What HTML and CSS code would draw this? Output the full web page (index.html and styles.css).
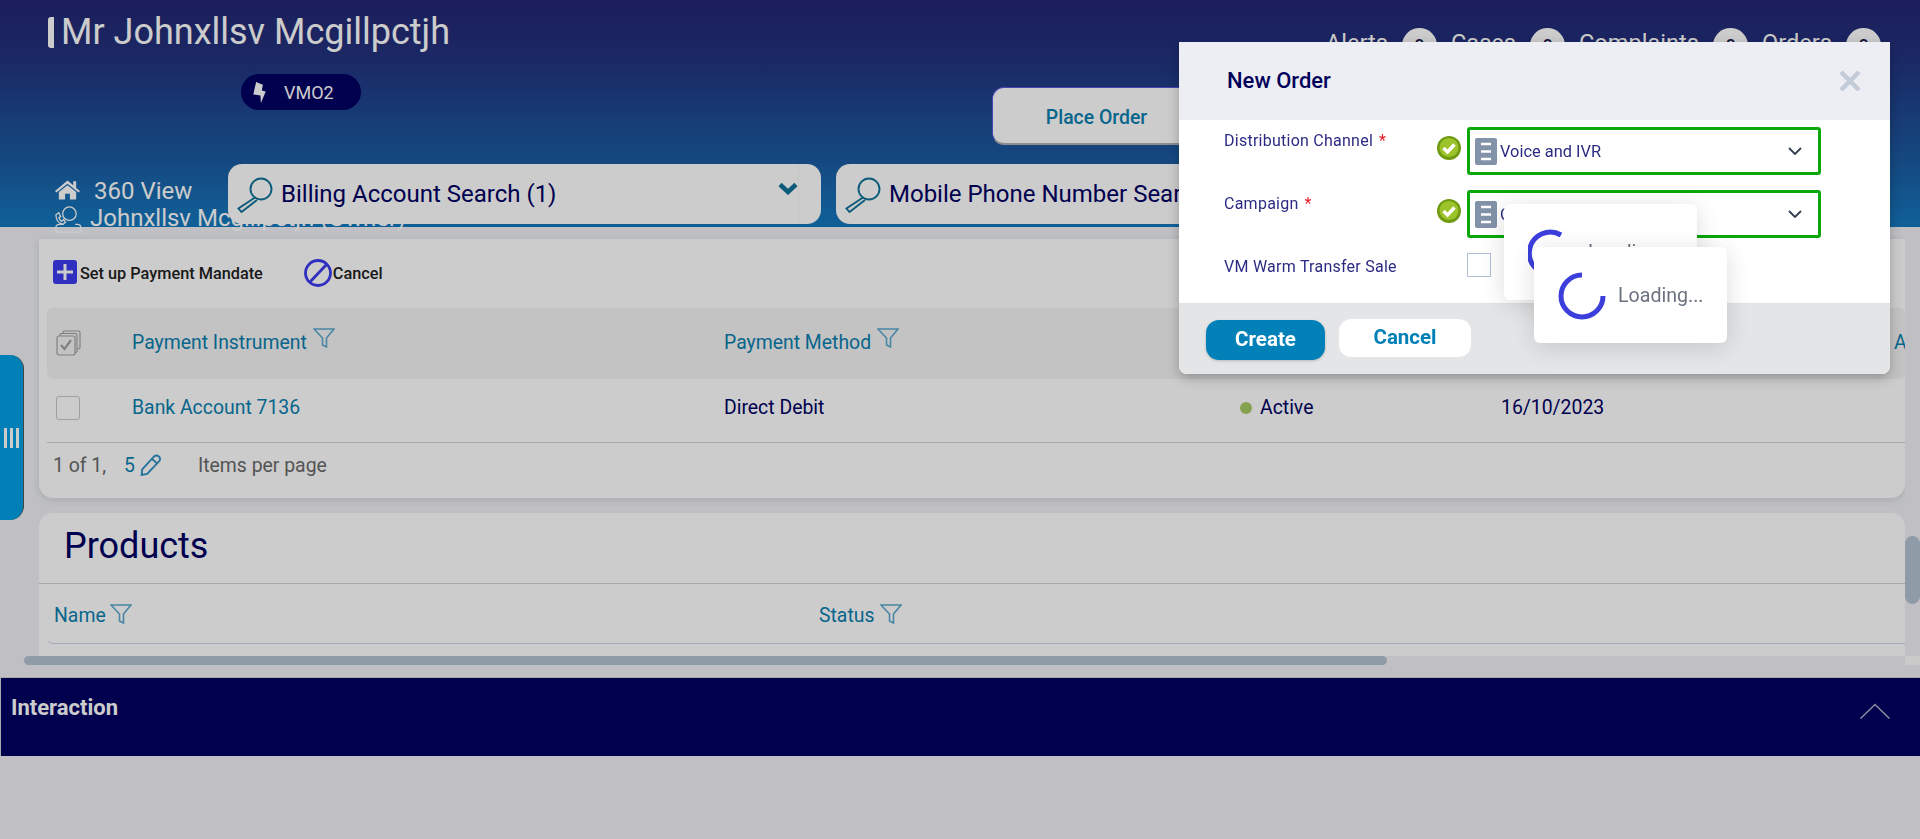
FILE: index.html
```html
<!DOCTYPE html>
<html lang="en">
<head>
<meta charset="utf-8">
<title>New Order</title>
<link rel="stylesheet" href="styles.css">
</head>
<body>
<div class="app">
  <header class="head">
    <div class="head-top">
      <h1 class="cust-name">Mr Johnxllsv Mcgillpctjh</h1>
      <ul class="stats">
        <li class="stat">Alerts<span class="count">0</span></li>
        <li class="stat">Cases<span class="count">0</span></li>
        <li class="stat">Complaints<span class="count">0</span></li>
        <li class="stat">Orders<span class="count">0</span></li>
      </ul>
    </div>
    <div class="head-mid">
      <span class="brand">
        <svg class="brand-icon" viewBox="0 0 14 24"><path d="M4 1 L11 4 L10 10 L14 11 L9 23 L8.5 15 L1 14 Z" fill="#fff"/></svg>
        VMO2
      </span>
      <button class="place-order">Place Order</button>
    </div>
    <div class="head-nav">
      <div class="crumbs">
        <div class="crumb">
          <svg class="home-icon" viewBox="0 0 26 20"><path d="M13 0 L19 5 V1 H22 V8 L26 11 L24.500 12.500 L13 3.500 L1.500 12.500 L0 11 Z M4 12 L13 5 L22 12 V20 H15.500 V14 H10.500 V20 H4 Z" fill="#fff"/></svg>
          360 View
        </div>
        <div class="crumb crumb-owner">
          <svg class="owner-icon" viewBox="0 0 30 28" fill="none" stroke="#fff" stroke-width="1.300"><circle cx="17" cy="8" r="7"/><path d="M3 27 V22 Q3 19 7 19 H11 M23 19 H25 Q29 19 29 23 V27 H3"/><path d="M3 9 L6 7 L8 11 L6 12 Q7 15 9 16 L11 14 L13 17 L10 19 Q3 17 3 9 Z"/></svg>
          Johnxllsv Mcgillpctjh (Owner)
        </div>
      </div>
      <div class="search-tab search-tab-first">
        <svg class="lens" viewBox="0 0 36 36" fill="none" stroke="#0f7299" stroke-width="1.900"><circle cx="24" cy="12" r="10.500"/><path d="M18 20.500 L1.500 31.500 L4.500 35 L20 23"/></svg>
        <span class="search-label">Billing Account Search (1)</span>
        <span class="search-caret"><svg viewBox="0 0 20 13" fill="none" stroke="#0f7299" stroke-width="4.500"><path d="M2 2.500 L10 10 L18 2.500"/></svg></span>
      </div>
      <div class="search-tab search-tab-second">
        <svg class="lens" viewBox="0 0 36 36" fill="none" stroke="#0f7299" stroke-width="1.900"><circle cx="24" cy="12" r="10.500"/><path d="M18 20.500 L1.500 31.500 L4.500 35 L20 23"/></svg>
        <span class="search-label">Mobile Phone Number Search</span>
      </div>
    </div>
  </header>

  <main class="workspace">
    <div class="scroll-view">
      <section class="card card-mandates">
        <div class="toolbar">
          <button class="tool tool-add">
            <svg class="add-icon" viewBox="0 0 24 24"><rect width="24" height="24" rx="3" fill="#3c3cf0"/><path d="M12 4 V20 M4 12 H20" stroke="#fff" stroke-width="3"/></svg>
            Set up Payment Mandate
          </button>
          <button class="tool tool-cancel">
            <svg class="cancel-icon" viewBox="0 0 28 28" fill="none" stroke="#3c3cf0" stroke-width="2.800"><circle cx="14" cy="14" r="12.500"/><path d="M6 23 L23 5"/></svg>
            Cancel
          </button>
        </div>
        <div class="grid-row grid-head">
          <span class="cell-check">
            <svg class="stack-icon" viewBox="0 0 25 26" fill="none" stroke="#a0a0a0" stroke-width="1.200"><rect x="7" y="1" width="17" height="18" rx="1.500"/><rect x="4" y="3.500" width="17" height="19" rx="1.500" fill="#f4f4f4"/><rect x="1" y="6" width="18" height="19" rx="2" fill="#f4f4f4"/><path d="M5 15 L8.500 19 L15 10" stroke-width="2.200"/></svg>
          </span>
          <span class="col-title">Payment Instrument<svg class="funnel" viewBox="0 0 22 20" fill="none" stroke="#5aa8cc" stroke-width="1.600"><path d="M1 1 H21 L13.500 10 V19 L9.500 17 V10 Z"/></svg></span>
          <span class="col-title">Payment Method<svg class="funnel" viewBox="0 0 22 20" fill="none" stroke="#5aa8cc" stroke-width="1.600"><path d="M1 1 H21 L13.500 10 V19 L9.500 17 V10 Z"/></svg></span>
          <span class="col-title">Status</span>
          <span class="col-title">Start Date</span>
          <span class="col-title">Amount</span>
        </div>
        <div class="grid-row grid-body">
          <span class="cell-check"><span class="row-box"></span></span>
          <a class="row-link">Bank Account 7136</a>
          <span>Direct Debit</span>
          <span class="status"><i class="status-dot"></i>Active</span>
          <span>16/10/2023</span>
          <span></span>
        </div>
        <div class="pager">
          <span>1 of 1,</span>
          <span class="page-size">5</span>
          <svg class="pencil" viewBox="0 0 20 20" fill="none" stroke="#2f8fc4" stroke-width="1.700"><path d="M2 14 L13 2 Q15 0.500 17.500 2.500 Q19 5 17.500 6.500 L6.500 18 L1.500 19 Z M11 4.500 L15.500 8.500"/></svg>
          <span class="per-page">Items per page</span>
        </div>
      </section>

      <section class="card card-products">
        <h2 class="section-title">Products</h2>
        <div class="products-head">
          <span class="col-title col-name">Name<svg class="funnel funnel-low funnel-tight" viewBox="0 0 22 20" fill="none" stroke="#5aa8cc" stroke-width="1.600"><path d="M1 1 H21 L13.500 10 V19 L9.500 17 V10 Z"/></svg></span>
          <span class="col-title">Status<svg class="funnel funnel-low" viewBox="0 0 22 20" fill="none" stroke="#5aa8cc" stroke-width="1.600"><path d="M1 1 H21 L13.500 10 V19 L9.500 17 V10 Z"/></svg></span>
        </div>
      </section>
    </div>
    <div class="vscroll"><span class="vthumb"></span></div>
    <div class="hscroll"><span class="hthumb"></span></div>
    <div class="corner"></div>
  </main>

  <footer class="interaction">
    <span class="interaction-title">Interaction</span>
    <svg class="interaction-caret" viewBox="0 0 30 16" fill="none" stroke="#b0b0c8" stroke-width="1.500"><path d="M0.500 15.500 L15 1.500 L29.500 15.500"/></svg>
  </footer>
</div>

<div class="side-handle"><span></span><span></span><span></span></div>

<div class="backdrop"></div>

<div class="modal">
  <div class="modal-head">
    <h3 class="modal-title">New Order</h3>
    <svg class="modal-close" viewBox="0 0 22 20" fill="none" stroke="#c3cbd8" stroke-width="4.500"><path d="M2 1 L20 19 M20 1 L2 19"/></svg>
  </div>
  <div class="modal-body">
    <div class="field">
      <label class="field-label">Distribution Channel<b class="req">*</b></label>
      <svg class="ok-icon" viewBox="0 0 24 24"><circle cx="12" cy="12" r="12" fill="#6f9a12"/><circle cx="12" cy="11.500" r="9.500" fill="#9cc42a"/><path d="M6.500 12 L10.500 16 L17.500 8.500" fill="none" stroke="#fff" stroke-width="3.400"/></svg>
      <div class="picker">
        <svg class="doc-icon" viewBox="0 0 22 27"><rect width="22" height="27" rx="2" fill="#8292a8"/><path d="M6 6 H16 M6 13.500 H16 M6 21 H16" stroke="#fff" stroke-width="2.600"/></svg>
        <span class="picker-value">Voice and IVR</span>
        <svg class="picker-caret" viewBox="0 0 14 8" fill="none" stroke="#333d50" stroke-width="1.800"><path d="M1 1 L7 7 L13 1"/></svg>
      </div>
    </div>
    <div class="field">
      <label class="field-label">Campaign<b class="req">*</b></label>
      <svg class="ok-icon" viewBox="0 0 24 24"><circle cx="12" cy="12" r="12" fill="#6f9a12"/><circle cx="12" cy="11.500" r="9.500" fill="#9cc42a"/><path d="M6.500 12 L10.500 16 L17.500 8.500" fill="none" stroke="#fff" stroke-width="3.400"/></svg>
      <div class="picker">
        <svg class="doc-icon" viewBox="0 0 22 27"><rect width="22" height="27" rx="2" fill="#8292a8"/><path d="M6 6 H16 M6 13.500 H16 M6 21 H16" stroke="#fff" stroke-width="2.600"/></svg>
        <span class="picker-value">Consumer</span>
        <svg class="picker-caret" viewBox="0 0 14 8" fill="none" stroke="#333d50" stroke-width="1.800"><path d="M1 1 L7 7 L13 1"/></svg>
      </div>
    </div>
    <div class="field field-check">
      <label class="field-label">VM Warm Transfer Sale</label>
      <span class="modal-box"></span>
    </div>
  </div>
  <div class="modal-foot">
    <button class="btn btn-primary">Create</button>
    <button class="btn btn-secondary">Cancel</button>
  </div>
</div>

<div class="loader loader-back">
  <svg class="spinner" viewBox="0 0 48 48" fill="none" stroke="#3c3fdc" stroke-width="5"><path d="M33 6 A21 21 0 1 0 24 45 A21 21 0 0 0 45 24"/></svg>
  <span class="loader-text">Loading...</span>
</div>
<div class="loader loader-front">
  <svg class="spinner" viewBox="0 0 48 48" fill="none" stroke="#3c3fdc" stroke-width="5"><path d="M24 3 A21 21 0 1 0 45 24"/></svg>
  <span class="loader-text">Loading...</span>
</div>
</body>
</html>
```
FILE: styles.css
```css
* { box-sizing: border-box; }
html, body { margin: 0; height: 100%; }
body {
  height: 839px;
  overflow: hidden;
  background: #f0f1f5;
  font-family: Roboto, "Liberation Sans", sans-serif;
  color: #000063;
}
button { font: inherit; border: 0; background: none; padding: 0; }
h1, h2, h3, ul { margin: 0; padding: 0; font-weight: 400; }
ul { list-style: none; }

.app { display: flex; flex-direction: column; height: 839px; }

/* header */
.head {
  flex: 0 0 227px;
  min-height: 0;
  display: flex;
  flex-direction: column;
  background: linear-gradient(180deg, #232772 0%, #22327e 25%, #1b5aa0 70%, #1579bf 100%);
  color: #fff;
}
.head-top {
  flex: 0 0 74px;
  display: flex;
  justify-content: space-between;
  padding: 17px 39px 0 48px;
}
.cust-name {
  height: 31px;
  padding-left: 7px;
  border-left: 6px solid #fff;
  border-radius: 3px 0 0 3px;
  font-size: 36px;
  line-height: 31px;
  white-space: nowrap;
}
.stats { display: flex; height: 36px; gap: 14px; margin-top: 11px; font-size: 23.600px; }
.stat { display: flex; gap: 14px; line-height: 31px; }
.count {
  width: 35px;
  height: 35px;
  border-radius: 50%;
  background: #fff;
  color: #1c1c50;
  font-size: 18px;
  font-weight: 500;
  line-height: 35px;
  text-align: center;
}
.head-mid {
  flex: 0 0 90px;
  display: flex;
  align-items: flex-start;
  padding-left: 241px;
}
.brand {
  display: flex;
  align-items: center;
  width: 120px;
  height: 36px;
  padding-left: 11px;
  border-radius: 18px;
  background: #000063;
  font-size: 18px;
  gap: 18px;
}
.brand-icon { width: 14px; height: 23px; }
.place-order {
  width: 207px;
  height: 58px;
  margin: 13px 0 0 631px;
  padding: 3px 0 0 2px;
  border-radius: 12px;
  border: 1px solid #5a55e0;
  border-bottom: 2px solid #b0b0b8;
  background: #fff;
  color: #0a7fb0;
  font-size: 19.400px;
  font-weight: 500;
}
.head-nav { flex: 0 0 60px; display: flex; align-items: flex-start; padding-left: 53px; }
.crumbs { flex: 0 0 175px; width: 175px; min-width: 0; height: 60px; font-size: 24px; }
.crumb { display: flex; align-items: center; white-space: nowrap; }
.crumb:first-child { height: 41px; padding: 13px 0 0 2px; gap: 14px; }
.crumb-owner { height: 26px; gap: 8px; line-height: 24px; }
.home-icon { width: 25px; height: 20px; flex: none; margin-top: -3px; }
.owner-icon { width: 29px; height: 27px; flex: none; margin-top: 3px; }
.search-tab {
  position: relative;
  z-index: 1;
  display: flex;
  align-items: center;
  height: 60px;
  border-radius: 14px;
  background: #fff;
  color: #000063;
  font-size: 24px;
}
.search-tab-first { flex: 0 0 593px; padding-left: 9px; }
.search-tab-second { flex: 0 0 620px; margin-left: 15px; padding-left: 9px; }
.lens { width: 36px; height: 36px; flex: none; margin-right: 8px; margin-top: 2px; }
.search-label { white-space: nowrap; }
.search-caret {
  display: flex;
  justify-content: center;
  width: 22px;
  height: 60px;
  margin-left: auto;
  margin-right: 22px;
  padding-top: 18px;
  border-right: 1px solid rgba(0, 0, 0, .03);
}
.search-caret svg { width: 20px; height: 13px; }

/* main workspace */
.workspace {
  flex: 0 0 438px;
  display: grid;
  grid-template-columns: 1fr 15px;
  grid-template-rows: 429px 9px;
}
.scroll-view {
  display: flex;
  flex-direction: column;
  gap: 15px;
  padding: 12px 0 0 39px;
  overflow: hidden;
}
.card { background: #fff; }
.card-mandates {
  flex: 0 0 259px;
  padding: 0 0 0 8px;
  border-radius: 0 0 14px 14px;
  box-shadow: 0 2px 8px rgba(0, 0, 0, .12);
}
.toolbar { display: flex; align-items: center; height: 69px; padding-left: 6px; gap: 41px; }
.tool { display: flex; align-items: center; color: #222; font-size: 16.300px; font-weight: 500; }
.tool-add { gap: 3px; }
.tool-cancel { gap: 1px; }
.add-icon { width: 24px; height: 24px; margin-top: -4px; }
.cancel-icon { width: 28px; height: 28px; margin-top: -2px; }
.grid-row { display: grid; grid-template-columns: 85px 592px 516px 261px 393px 1fr; font-size: 19.400px; }
.grid-head {
  height: 71px;
  align-items: center;
  padding-bottom: 2px;
  border-radius: 6px;
  background: #f4f4f4;
  overflow: hidden;
}
.grid-body {
  height: 64px;
  align-items: center;
  padding-bottom: 6px;
  border-bottom: 1px solid #d4d4d4;
  color: #000063;
}
.cell-check { padding-left: 9px; display: flex; }
.stack-icon { width: 25px; height: 26px; }
.row-box { width: 24px; height: 24px; border: 1px solid #c8c8c8; border-radius: 3px; background: #fff; }
.col-title { display: flex; align-items: flex-start; color: #0a7fb0; font-size: 19.400px; white-space: nowrap; }
.funnel { width: 22px; height: 20px; margin: -3px 0 0 6px; flex: none; }
.funnel-low { margin-top: 0; }
.funnel-tight { margin-left: 4px; }
.row-link { color: #0a7fb0; }
.status { display: flex; align-items: center; gap: 8px; }
.status-dot { width: 12px; height: 12px; border-radius: 50%; background: #a8cb64; }
.pager {
  display: flex;
  align-items: center;
  height: 44px;
  padding-left: 6px;
  color: #6a6a6a;
  font-size: 19.400px;
}
.page-size { margin-left: 18px; color: #0a7fb0; }
.pencil { width: 22px; height: 22px; margin-left: 5px; }
.per-page { margin-left: 36px; }
.card-products { flex: 0 0 154px; border-radius: 14px 14px 0 0; }
.section-title {
  height: 71px;
  padding: 11px 0 0 25px;
  border-bottom: 1px solid #d4d4d4;
  font-size: 36px;
  line-height: 44px;
}
.products-head {
  display: flex;
  align-items: center;
  height: 60px;
  margin-left: 8px;
  padding: 4px 0 0 7px;
  border-bottom: 1px solid #ccd9e6;
  border-radius: 0 0 0 6px;
}
.col-name { width: 765px; }
.vscroll { padding-top: 309px; }
.vthumb { display: block; height: 68px; border-radius: 8px; background: #b5c2d2; }
.hscroll { padding-left: 24px; }
.hthumb { display: block; width: 1363px; height: 9px; border-radius: 5px; background: #b5c2d2; }
.corner { background: #fdfdfa; }

.interaction {
  flex: 0 0 79px;
  display: flex;
  justify-content: space-between;
  margin-top: 12px;
  padding: 18px 30px 0 10px;
  border-top: 1px solid #d4d5d8;
  border-left: 1px solid #d4d5d8;
  background: #000063;
  color: #fff;
}
.interaction-title { font-size: 22px; font-weight: 700; line-height: 24px; }
.interaction-caret { width: 30px; height: 16px; margin-top: 7px; }

.side-handle {
  position: absolute;
  top: 355px;
  left: 0;
  display: flex;
  align-items: center;
  justify-content: center;
  gap: 3px;
  width: 24px;
  height: 165px;
  border-right: 1px solid #555;
  border-radius: 0 14px 14px 0;
  background: #02a0e6;
}
.side-handle span { width: 3px; height: 20px; background: #fff; }

.backdrop { position: fixed; inset: 0; z-index: 10; background: rgba(0, 0, 0, .2); }

/* modal */
.modal {
  position: absolute;
  z-index: 11;
  top: 42px;
  left: 1179px;
  width: 711px;
  height: 332px;
  display: flex;
  flex-direction: column;
  border-radius: 0 0 8px 8px;
  background: #fff;
  box-shadow: 0 4px 12px rgba(0, 0, 0, .25);
  color: #2b2b83;
}
.modal-head {
  flex: 0 0 78px;
  display: flex;
  align-items: center;
  justify-content: space-between;
  padding: 0 29px 2px 48px;
  background: #eceef3;
}
.modal-title { color: #00005a; font-size: 22px; font-weight: 500; }
.modal-close { width: 22px; height: 20px; margin-top: 2px; }
.modal-body {
  flex: 0 0 183px;
  padding: 7px 0 0 45px;
  display: flex;
  flex-direction: column;
  gap: 15px;
}
.field { display: flex; align-items: flex-start; height: 48px; }
.field-label {
  flex: 0 0 213px;
  padding-top: 4px;
  font-size: 16px;
  line-height: 20px;
  letter-spacing: .25px;
}
.req { margin-left: 6px; color: #e5202b; font-weight: 400; }
.ok-icon { width: 24px; height: 24px; flex: none; margin: 9px 6px 0 0; }
.picker {
  display: flex;
  align-items: center;
  width: 354px;
  height: 48px;
  padding: 0 16px 0 5px;
  border: 3px solid #0aa80a;
  border-radius: 3px;
}
.doc-icon { width: 22px; height: 27px; flex: none; }
.picker-value { margin-left: 3px; font-size: 16.400px; }
.picker-caret { width: 14px; height: 8px; margin-left: auto; }
.field-check { align-items: flex-start; }
.field-check .field-label { flex-basis: 243px; padding-top: 4px; }
.modal-box { width: 24px; height: 24px; border: 1px solid #b0bfd4; }
.modal-foot {
  flex: 1;
  display: flex;
  align-items: flex-start;
  gap: 13px;
  padding: 14px 0 0 27px;
  border-top: 1px solid #dfe2e8;
  border-radius: 0 0 8px 8px;
  background: #e4e5e6;
}
.btn { height: 40px; border-radius: 13px; padding-bottom: 2px; font-size: 20.500px; font-weight: 700; }
.btn-primary { width: 119px; margin-top: 2px; background: #0280b8; color: #fff; box-shadow: 0 1px 3px rgba(0, 0, 0, .2); }
.btn-secondary { width: 134px; border: 1px solid #e4e6ea; background: #fff; color: #0280b8; }

.loader {
  position: absolute;
  z-index: 12;
  display: flex;
  align-items: flex-start;
  width: 193px;
  height: 96px;
  padding: 25px 0 0 24px;
  gap: 12px;
  border-radius: 6px;
  background: #fff;
  box-shadow: 0 4px 24px rgba(0, 0, 0, .14);
}
.loader-back { top: 204px; left: 1504px; }
.loader-front { top: 247px; left: 1534px; }
.spinner { width: 48px; height: 48px; flex: none; }
.loader-text { margin-top: 12px; color: #6b7280; font-size: 19.600px; }
```
